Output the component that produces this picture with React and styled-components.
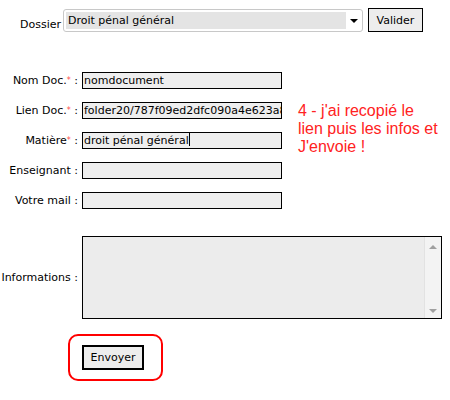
import React from 'react';
import styled, { createGlobalStyle } from 'styled-components';

const GlobalStyle = createGlobalStyle`
  body {
    margin: 0;
    background: #fff;
    font-family: "DejaVu Sans", Verdana, sans-serif;
    font-size: 11px;
    color: #000;
  }
`;

const Page = styled.div`
  width: 450px;
  height: 400px;
  display: flex;
  flex-direction: column;
`;

const TopRow = styled.div`
  display: flex;
  align-items: flex-start;
  padding: 8px 0 0 20px;
`;

const TopLabel = styled.span`
  width: 43px;
  margin-top: 10px;
`;

const SelectBox = styled.div`
  box-sizing: border-box;
  width: 300px;
  height: 23px;
  margin-top: 1px;
  padding: 2px;
  display: flex;
  align-items: stretch;
  border: 1px solid #c8c8c8;
  border-radius: 3px;
  background: #fff;
`;

const SelectValue = styled.div`
  width: 278px;
  padding-left: 2px;
  line-height: 17px;
  background: #e4e4e4;
  white-space: nowrap;
`;

const SelectArrow = styled.div`
  flex: 1;
  display: flex;
  align-items: center;
  justify-content: center;
  padding-left: 2px;

  &::after {
    content: "";
    border-left: 4px solid transparent;
    border-right: 4px solid transparent;
    border-top: 4px solid #000;
  }
`;

const Button = styled.button`
  box-sizing: border-box;
  font-family: "DejaVu Sans", Verdana, sans-serif;
  font-size: 11px;
  color: #000;
  background: #ededed;
  border: ${p => (p.$thick ? '2px' : '1px')} solid #000;
  padding: 0;
  width: ${p => p.$width}px;
  height: ${p => p.$height}px;
`;

const TopButton = styled(Button)`
  margin-left: 5px;
`;

const FormGrid = styled.div`
  display: grid;
  grid-template-columns: 78px 200px 156px;
  grid-template-rows: repeat(5, 17px) 97px;
  column-gap: 4px;
  row-gap: 13px;
  margin-top: 40px;
`;

const Label = styled.label`
  grid-column: 1;
  display: flex;
  align-items: center;
  justify-content: flex-end;
  white-space: nowrap;
  grid-row: ${p => p.$row};
`;

const Star = styled.sup`
  color: #ff4a4a;
  font-size: 8px;
  line-height: 0;
`;

const Field = styled.div`
  grid-column: 2;
  grid-row: ${p => p.$row};
  box-sizing: border-box;
  height: 17px;
  padding-left: 1px;
  border: 1px solid #000;
  background: #eeeeee;
  line-height: 15px;
  white-space: nowrap;
  overflow: hidden;
`;

const Caret = styled.span`
  display: inline-block;
  width: 1px;
  height: 13px;
  background: #000;
  vertical-align: -2px;
`;

const Note = styled.div`
  grid-column: 3;
  grid-row: 2 / span 3;
  width: 143px;
  margin-left: 12px;
  font-family: "Liberation Sans", Arial, sans-serif;
  font-size: 16px;
  line-height: 18px;
  color: #ff2222;
`;

const InfoLabel = styled(Label)`
  margin-top: 14px;
`;

const TextArea = styled.div`
  grid-column: 2 / span 2;
  grid-row: 6;
  margin-top: 14px;
  box-sizing: border-box;
  width: 360px;
  height: 83px;
  display: flex;
  justify-content: flex-end;
  border: 1px solid #000;
  background: #ececec;
`;

const ScrollBar = styled.div`
  width: 16px;
  display: flex;
  flex-direction: column;
  justify-content: space-between;
  align-items: center;
  padding: 8px 0 5px;
  background: #f3f3f3;
  border-left: 1px solid #e2e2e2;
`;

const ScrollArrow = styled.span`
  border-left: 4px solid transparent;
  border-right: 4px solid transparent;
  ${p => (p.$up ? 'border-bottom' : 'border-top')}: 4px solid #a0a0a0;
`;

const SubmitRow = styled.div`
  padding: 0 0 0 68px;
  margin-top: 15px;
`;

const Annotation = styled.div`
  box-sizing: border-box;
  width: 95px;
  height: 47px;
  padding: 9px 0 0 12px;
  border: 2px solid #ff0000;
  border-radius: 10px;
`;

const fields = [
  { label: 'Nom Doc.', required: true, value: 'nomdocument' },
  { label: 'Lien Doc.', required: true, value: 'folder20/787f09ed2dfc090a4e623a8c1' },
  { label: 'Matière', required: true, value: 'droit pénal général', caret: true },
  { label: 'Enseignant', value: '' },
  { label: 'Votre mail', value: '' },
];

export default function App() {
  return (
    <Page>
      <GlobalStyle />
      <TopRow>
        <TopLabel>Dossier</TopLabel>
        <SelectBox>
          <SelectValue>Droit pénal général</SelectValue>
          <SelectArrow />
        </SelectBox>
        <TopButton $width={55} $height={24}>Valider</TopButton>
      </TopRow>

      <FormGrid>
        {fields.map((f, i) => (
          <React.Fragment key={f.label}>
            <Label $row={i + 1}>
              {f.label}
              {f.required && <Star>*</Star>}
              &nbsp;:
            </Label>
            <Field $row={i + 1}>
              {f.value}
              {f.caret && <Caret />}
            </Field>
          </React.Fragment>
        ))}
        <Note>4 - j'ai recopié le lien puis les infos et J'envoie !</Note>
        <InfoLabel $row={6}>Informations :</InfoLabel>
        <TextArea>
          <ScrollBar>
            <ScrollArrow $up />
            <ScrollArrow />
          </ScrollBar>
        </TextArea>
      </FormGrid>

      <SubmitRow>
        <Annotation>
          <Button $thick $width={62} $height={25}>Envoyer</Button>
        </Annotation>
      </SubmitRow>
    </Page>
  );
}
